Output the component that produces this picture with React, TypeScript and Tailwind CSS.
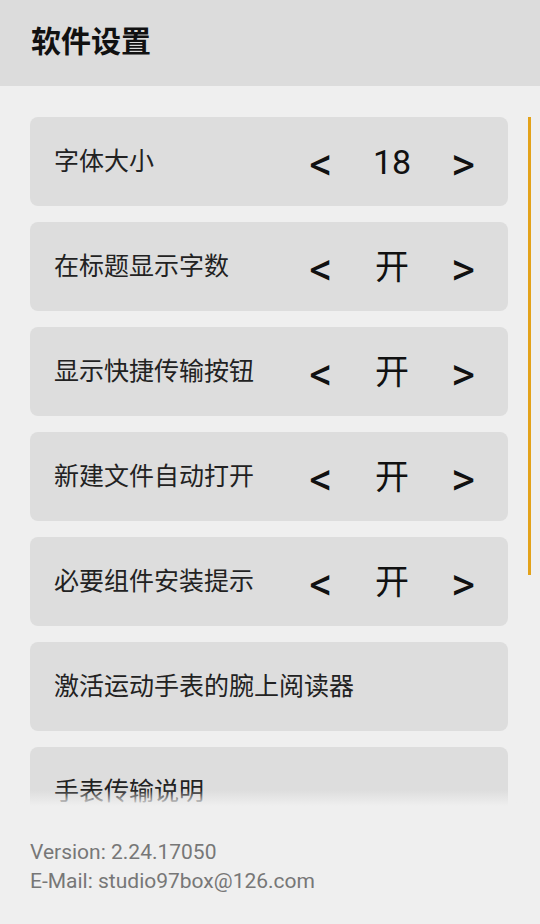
const settings: { label: string; value?: string }[] = [
  { label: "字体大小", value: "18" },
  { label: "在标题显示字数", value: "开" },
  { label: "显示快捷传输按钮", value: "开" },
  { label: "新建文件自动打开", value: "开" },
  { label: "必要组件安装提示", value: "开" },
  { label: "激活运动手表的腕上阅读器" },
  { label: "手表传输说明" },
];

const font = { fontFamily: 'Roboto, "Noto Sans CJK SC", sans-serif' };

function SettingRow({ label, value }: { label: string; value?: string }) {
  return (
    <div className="flex h-[89px] shrink-0 items-center justify-between rounded-lg bg-[#dddddd] pl-6 pr-[25px] pt-[1px]">
      <span className="text-[25px] text-[#222222]">{label}</span>
      {value && (
        <div className="flex items-center text-[#111111]">
          <span className="w-10 pt-[4px] text-center text-[46px] leading-none">&lt;</span>
          <span className="w-[102px] text-center text-[34px] leading-none">{value}</span>
          <span className="w-10 pt-[4px] text-center text-[46px] leading-none">&gt;</span>
        </div>
      )}
    </div>
  );
}

export default function App() {
  return (
    <div className="flex min-h-[924px] w-[540px] flex-col bg-[#efefef]" style={font}>
      <header className="flex h-[86px] shrink-0 items-center bg-[#dcdcdc] px-[31px] pb-[4px]">
        <h1 className="text-[30px] font-bold text-[#111111]">软件设置</h1>
      </header>

      <div className="relative h-[720px] shrink-0 overflow-hidden">
        <div className="flex flex-col gap-4 px-[30px] pr-[32px] pt-[31px]">
          {settings.map((s) => (
            <SettingRow key={s.label} label={s.label} value={s.value} />
          ))}
        </div>
        {/* scroll indicator */}
        <div className="absolute right-[9px] top-[31px] h-[458px] w-[3px] bg-[#e3a21a]" />
        <div className="absolute inset-x-0 bottom-0 h-[16px] bg-gradient-to-b from-[#efefef]/0 to-[#efefef]" />
      </div>

      <footer className="px-[30px] pt-[32px] text-[21px] leading-[29px] text-[#777777]">
        <p>Version: 2.24.17050</p>
        <p>E-Mail: studio97box@126.com</p>
      </footer>
    </div>
  );
}
